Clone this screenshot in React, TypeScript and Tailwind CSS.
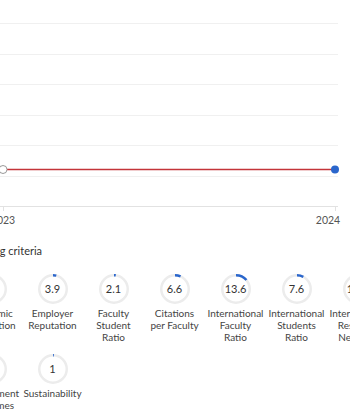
const criteria = [
  { label: ['Academic', 'Reputation'], value: 4.5 },
  { label: ['Employer', 'Reputation'], value: 3.9 },
  { label: ['Faculty', 'Student', 'Ratio'], value: 2.1 },
  { label: ['Citations', 'per Faculty'], value: 6.6 },
  { label: ['International', 'Faculty', 'Ratio'], value: 13.6 },
  { label: ['International', 'Students', 'Ratio'], value: 7.6 },
  { label: ['International', 'Research', 'Network'], value: 10.2 },
  { label: ['Employment', 'Outcomes'], value: 4.5 },
  { label: ['Sustainability'], value: 1 },
]

function Ring({ value }: { value: number }) {
  const r = 13.75
  const c = 2 * Math.PI * r
  return (
    <div className="relative w-[30px] h-[30px]">
      <svg width="30" height="30" viewBox="0 0 30 30" className="-rotate-90">
        <circle cx="15" cy="15" r={r} fill="none" stroke="#ececec" strokeWidth="2.5" />
        <circle
          cx="15"
          cy="15"
          r={r}
          fill="none"
          stroke="#2a66cc"
          strokeWidth="2.5"
          strokeDasharray={`${(value / 100) * c} ${c}`}
        />
      </svg>
      <span className="absolute inset-0 flex items-center justify-center text-[11px] text-[#333]">
        {value}
      </span>
    </div>
  )
}

function Chart() {
  const grid = [23, 54, 84, 115, 145, 176]
  return (
    <svg width="420" height="234" className="block">
      {grid.map((y) => (
        <line key={y} x1="0" x2="378" y1={y + 0.5} y2={y + 0.5} stroke="#f0f0f0" strokeWidth="1" />
      ))}
      <line x1="0" x2="378" y1="206.5" y2="206.5" stroke="#e2e2e2" strokeWidth="1" />
      <line x1="43.5" x2="43.5" y1="206" y2="211" stroke="#e2e2e2" />
      <line x1="375.5" x2="375.5" y1="206" y2="211" stroke="#e2e2e2" />
      <line x1="43" x2="375" y1="169.5" y2="169.5" stroke="#c4343a" strokeWidth="1.5" />
      <circle cx="43" cy="169.5" r="4" fill="#fff" stroke="#9a9a9a" strokeWidth="1" />
      <circle cx="375" cy="169.5" r="4" fill="#2a66cc" />
      <text x="43" y="224" textAnchor="middle" fontSize="10.5" fill="#555" fontFamily="Lato, sans-serif">
        2023
      </text>
      <text x="368" y="224" textAnchor="middle" fontSize="10.5" fill="#555" fontFamily="Lato, sans-serif">
        2024
      </text>
    </svg>
  )
}

export default function App() {
  return (
    <div className="w-[350px] h-[420px] overflow-hidden bg-white font-['Lato',sans-serif]">
      <div className="-ml-[40px] w-[430px]">
        <Chart />
        {/* section title, cut by the scroll position */}
        <div className="h-[32px] flex items-center text-[11px] text-[#333] pl-[7px] mt-[1px]">
          Ranking criteria
        </div>
        <div className="grid grid-cols-[repeat(7,61px)] pl-[1px] mt-[7px]">
          {criteria.map((item) => (
            <div key={item.label.join(' ')} className="h-[80px] flex flex-col items-center">
              <Ring value={item.value} />
              <div className="mt-[3px] text-[10px] leading-[12px] text-[#444] text-center">
                {item.label.map((l) => (
                  <div key={l}>{l}</div>
                ))}
              </div>
            </div>
          ))}
        </div>
      </div>
    </div>
  )
}
